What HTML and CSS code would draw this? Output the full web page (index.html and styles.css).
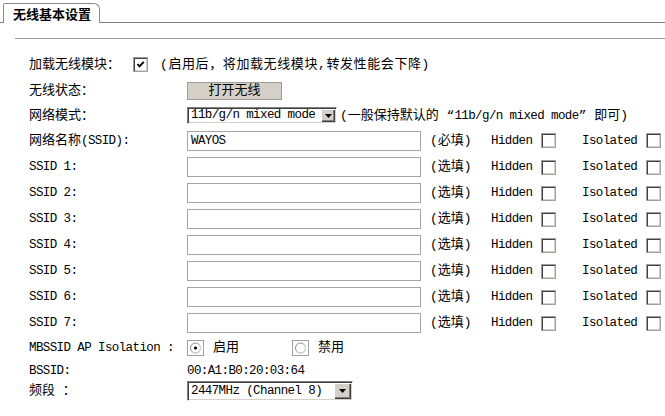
FILE: index.html
```html
<!DOCTYPE html>
<html lang="zh-CN">
<head>
<meta charset="utf-8">
<title>无线基本设置</title>
<link rel="stylesheet" href="styles.css">
</head>
<body>
<div class="tabbar">
  <div class="tab-edge"></div>
  <div class="tab">无线基本设置</div>
  <div class="tab-fill"></div>
</div>
<div class="rule"></div>
<div class="form">
  <div class="row row-load">
    <span>加载无线模块：</span>
    <span class="cb"><svg width="13" height="13" viewBox="0 0 13 13"><path d="M3.5 6 L5.5 8.3 L9.8 3.8" fill="none" stroke="#000" stroke-width="1.9"/></svg></span>
    <span class="hint">(启用后，将加载无线模块,转发性能会下降)</span>
  </div>
  <div class="row">
    <span class="lbl">无线状态：</span>
    <span class="btn">打开无线</span>
  </div>
  <div class="row row-mode">
    <span class="lbl">网络模式：</span>
    <div class="sel sel-mode"><span class="sel-text">11b/g/n mixed mode</span><span class="arrow"><svg width="7" height="4" viewBox="0 0 7 4"><path d="M0 0H7L3.5 4Z"/></svg></span></div>
    <span class="hint-mode">(一般保持默认的 “<span class="m">11b/g/n mixed mode</span>” 即可)</span>
  </div>
  <div class="row row-name">
    <span class="lbl">网络名称<span class="m">(SSID):</span></span>
    <span class="txt m">WAYOS</span>
    <span class="note">(必填)</span>
    <span class="flag m">Hidden</span><span class="cb"></span>
    <span class="flag2 m">Isolated</span><span class="cb"></span>
  </div>
  <div class="row">
    <span class="lbl m">SSID 1:</span>
    <span class="txt"></span>
    <span class="note">(选填)</span>
    <span class="flag m">Hidden</span><span class="cb"></span>
    <span class="flag2 m">Isolated</span><span class="cb"></span>
  </div>
  <div class="row">
    <span class="lbl m">SSID 2:</span>
    <span class="txt"></span>
    <span class="note">(选填)</span>
    <span class="flag m">Hidden</span><span class="cb"></span>
    <span class="flag2 m">Isolated</span><span class="cb"></span>
  </div>
  <div class="row">
    <span class="lbl m">SSID 3:</span>
    <span class="txt"></span>
    <span class="note">(选填)</span>
    <span class="flag m">Hidden</span><span class="cb"></span>
    <span class="flag2 m">Isolated</span><span class="cb"></span>
  </div>
  <div class="row">
    <span class="lbl m">SSID 4:</span>
    <span class="txt"></span>
    <span class="note">(选填)</span>
    <span class="flag m">Hidden</span><span class="cb"></span>
    <span class="flag2 m">Isolated</span><span class="cb"></span>
  </div>
  <div class="row">
    <span class="lbl m">SSID 5:</span>
    <span class="txt"></span>
    <span class="note">(选填)</span>
    <span class="flag m">Hidden</span><span class="cb"></span>
    <span class="flag2 m">Isolated</span><span class="cb"></span>
  </div>
  <div class="row">
    <span class="lbl m">SSID 6:</span>
    <span class="txt"></span>
    <span class="note">(选填)</span>
    <span class="flag m">Hidden</span><span class="cb"></span>
    <span class="flag2 m">Isolated</span><span class="cb"></span>
  </div>
  <div class="row">
    <span class="lbl m">SSID 7:</span>
    <span class="txt"></span>
    <span class="note">(选填)</span>
    <span class="flag m">Hidden</span><span class="cb"></span>
    <span class="flag2 m">Isolated</span><span class="cb"></span>
  </div>
  <div class="row row-iso">
    <span class="lbl m">MBSSID AP Isolation :</span>
    <span class="radio-opt">
      <svg class="radio" width="17" height="16" viewBox="0 0 17 16"><rect x="0.5" y="0.5" width="16" height="15" fill="#fff" stroke="#a0a0a0"/><circle cx="8.5" cy="8" r="5" fill="#fff" stroke="#8a8a8a"/><path d="M4.96 11.54 A5 5 0 0 0 12.04 4.46" fill="none" stroke="#dcdcdc"/><circle cx="8.5" cy="8" r="1.6" fill="#000"/></svg>
      <span>启用</span>
    </span>
    <span class="radio-opt">
      <svg class="radio" width="17" height="16" viewBox="0 0 17 16"><rect x="0.5" y="0.5" width="16" height="15" fill="#fff" stroke="#a0a0a0"/><circle cx="8.5" cy="8" r="5" fill="#fff" stroke="#8a8a8a"/><path d="M4.96 11.54 A5 5 0 0 0 12.04 4.46" fill="none" stroke="#dcdcdc"/></svg>
      <span>禁用</span>
    </span>
  </div>
  <div class="row row-bssid">
    <span class="lbl m">BSSID:</span>
    <span class="m">00:A1:B0:20:03:64</span>
  </div>
  <div class="row row-band">
    <span class="lbl">频段 ：</span>
    <div class="sel sel-band"><span class="sel-text">2447MHz (Channel 8)</span><span class="arrow"><svg width="7" height="4" viewBox="0 0 7 4"><path d="M0 0H7L3.5 4Z"/></svg></span></div>
  </div>
</div>
</body>
</html>
```
FILE: styles.css
```css
* { box-sizing: border-box; }
body {
  margin: 0;
  background: #fff;
  color: #000;
  font-family: "Liberation Mono", "Noto Sans CJK SC", monospace;
  font-size: 13px;
  line-height: 16px;
}
.m { font-size: 12.5px; letter-spacing: -0.6px; }

.tabbar { display: flex; height: 23px; padding-top: 3px; }
.tab-edge { width: 3px; border-bottom: 1px solid #808080; }
.tab {
  width: 97px;
  border: 1px solid #8a8a8a;
  border-bottom: none;
  border-radius: 2px 6px 0 0;
  padding: 2px 0 0 9px;
  font-family: "Noto Sans CJK SC", sans-serif;
  font-weight: 700;
}
.tab-fill { flex: 1; border-bottom: 1px solid #808080; }

.rule { margin: 15px 0 0 15px; border-top: 1px solid #999; }

.form { padding: 12px 0 0 29px; }
.row { display: flex; align-items: center; height: 26px; white-space: nowrap; }
.row-load { height: 27px; }
.row-mode { height: 23px; }
.row-name { height: 27px; }
.row-iso { height: 24px; }
.row-bssid { height: 21px; }
.row-band { height: 20px; }
.lbl { width: 158px; flex-shrink: 0; }

.cb {
  width: 15px;
  height: 15px;
  flex-shrink: 0;
  display: block;
  border: 1px solid #a0a0a0;
  background: #fff;
  box-shadow: inset 1px 1px 0 #404040, inset -1px -1px 0 #d4d0c8;
}
.cb svg { display: block; }
.row-load .cb { margin-left: 13px; }
.row-load .hint { margin-left: 12px; letter-spacing: 0.6px; }

.btn {
  width: 95px;
  height: 18px;
  background: #d4d0c8;
  border: 1px solid #a09c94;
  text-align: center;
  line-height: 16px;
}

.sel {
  display: flex;
  height: 17px;
  padding: 1px;
  background: #fff;
  border-top: 1px solid #808080;
  border-left: 1px solid #808080;
  border-right: 1px solid #fff;
  border-bottom: 1px solid #fff;
  box-shadow: inset 1px 1px 0 #404040, inset -1px -1px 0 #d4d0c8;
}
.sel-mode { width: 150px; }
.sel-band { width: 166px; height: 20px; }
.sel-text { flex: 1; padding-left: 2px; font-size: 12.5px; letter-spacing: -0.6px; line-height: 13px; }
.sel-band .sel-text { line-height: 16px; }
.arrow {
  width: 14px;
  display: flex;
  align-items: center;
  justify-content: center;
  background: #d4d0c8;
  box-shadow: inset 1px 1px 0 #fff, inset -1px -1px 0 #404040, inset -2px -2px 0 #808080;
}
.sel-band .arrow { width: 17px; }
.arrow svg { display: block; }
.hint-mode { margin-left: 3px; }

.txt {
  width: 234px;
  height: 20px;
  border: 1px solid #a5a5a5;
  padding-left: 3px;
  line-height: 18px;
  flex-shrink: 0;
}
.note { width: 61px; margin-left: 9px; flex-shrink: 0; }
.flag { width: 50px; flex-shrink: 0; }
.flag2 { width: 64px; margin-left: 26px; flex-shrink: 0; }

.radio-opt { display: flex; align-items: center; width: 105px; flex-shrink: 0; }
.radio { display: block; margin-right: 9px; }
```
